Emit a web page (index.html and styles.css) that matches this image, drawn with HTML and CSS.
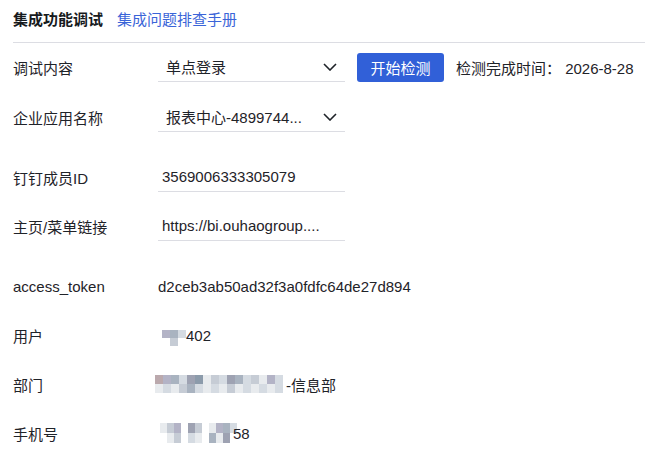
FILE: index.html
```html
<!DOCTYPE html>
<html>
<head>
    <meta charset="UTF-8">
    <title>集成功能调试</title>
    <link rel="stylesheet" href="styles.css">
</head>
<body>
    <div class="panel">
        <div class="header">
            <span class="title">集成功能调试</span>
            <a class="link" href="#">集成问题排查手册</a>
        </div>

        <div class="row first">
            <span class="label">调试内容</span>
            <div class="select">
                <span class="select-text">单点登录</span>
                <svg class="chevron" width="14" height="8" viewBox="0 0 14 8"><polyline points="1,1 7,7 13,1" /></svg>
            </div>
            <button class="btn">开始检测</button>
            <span class="status">检测完成时间： 2026-8-28</span>
        </div>

        <div class="row second">
            <span class="label">企业应用名称</span>
            <div class="select">
                <span class="select-text">报表中心-4899744...</span>
                <svg class="chevron" width="14" height="8" viewBox="0 0 14 8"><polyline points="1,1 7,7 13,1" /></svg>
            </div>
        </div>

        <div class="row third">
            <span class="label">钉钉成员ID</span>
            <div class="input">3569006333305079</div>
        </div>

        <div class="row fourth">
            <span class="label">主页/菜单链接</span>
            <div class="input">https://bi.ouhaogroup....</div>
        </div>

        <div class="info token">
            <span class="label">access_token</span>
            <span class="value">d2ceb3ab50ad32f3a0fdfc64de27d894</span>
        </div>

        <div class="info">
            <span class="label">用户</span>
            <span class="value masked">
                <span class="mosaic user">
                    <i class="s2"></i><i class="s3"></i><i class="s5"></i>
                    <i></i><i class="s4"></i><i></i>
                </span>402
            </span>
        </div>

        <div class="info">
            <span class="label">部门</span>
            <span class="value masked">
                <span class="mosaic dept">
                    <i class="s7"></i><i class="s2"></i><i class="s3"></i><i class="s5"></i><i class="s1"></i><i class="s8"></i><i class="s6"></i><i class="s4"></i><i class="s5"></i><i class="s1"></i><i class="s3"></i><i class="s5"></i><i class="s4"></i><i class="s6"></i><i class="s2"></i><i class="s5"></i>
                    <i class="s6"></i><i class="s5"></i><i class="s6"></i><i class="s4"></i><i class="s3"></i><i class="s5"></i><i class="s6"></i><i class="s5"></i><i class="s6"></i><i class="s4"></i><i class="s6"></i><i class="s5"></i><i class="s6"></i><i class="s5"></i><i class="s6"></i><i class="s5"></i>
                </span>-信息部
            </span>
        </div>

        <div class="info">
            <span class="label">手机号</span>
            <span class="value masked">
                <span class="mosaic phone">
                    <i class="s6"></i><i class="s4"></i><i class="s2"></i><i></i><i class="s1"></i><i class="s4"></i><i></i><i class="s6"></i><i class="s2"></i><i class="s3"></i><i class="s5"></i>
                    <i></i><i class="s6"></i><i class="s4"></i><i></i><i class="s5"></i><i class="s6"></i><i></i><i class="s3"></i><i class="s6"></i><i class="s1"></i><i></i>
                </span>58
            </span>
        </div>
    </div>
</body>
</html>
```

FILE: styles.css
```css
body {
    margin: 0;
    font-family: "Liberation Sans", "Noto Sans CJK SC", sans-serif;
    font-size: 15px;
    color: #1f2329;
    background-color: #fff;
}

.panel {
    padding-left: 13px;
}

.header {
    display: flex;
    align-items: center;
    gap: 14px;
    height: 43px;
    padding-bottom: 6px;
    box-sizing: border-box;
    border-bottom: 1px solid #dcdde3;
}

.title {
    font-weight: bold;
    color: #171a1d;
}

.link {
    color: #3a64d8;
    text-decoration: none;
}

.row {
    display: flex;
    align-items: center;
    height: 30px;
}

.row.first { margin-top: 9px; }
.row.second { margin-top: 20px; }
.row.third { margin-top: 30px; }
.row.fourth { margin-top: 19px; }

.label {
    width: 145px;
    flex-shrink: 0;
}

.select {
    display: flex;
    align-items: center;
    justify-content: space-between;
    width: 187px;
    height: 30px;
    padding: 0 8px;
    box-sizing: border-box;
    border-bottom: 1px solid #dcdde3;
}

.chevron {
    fill: none;
    stroke: #1f2329;
    stroke-width: 1.6;
}

.input {
    display: flex;
    align-items: center;
    width: 187px;
    height: 30px;
    padding: 0 4px;
    box-sizing: border-box;
    border-bottom: 1px solid #dcdde3;
    white-space: nowrap;
    overflow: hidden;
}

.btn {
    margin-left: 12px;
    width: 87px;
    height: 29px;
    border: none;
    border-radius: 3px;
    background-color: #3160d8;
    color: #fff;
    font-family: inherit;
    font-size: 15px;
    cursor: pointer;
}

.status {
    margin-left: 12px;
}

.info {
    display: flex;
    align-items: center;
    height: 20px;
    margin-top: 29px;
}

.info.token {
    margin-top: 35px;
}

.value.masked {
    display: flex;
    align-items: center;
}

/* pixelated privacy blocks */
.mosaic {
    display: grid;
    grid-auto-rows: 8px;
}

.mosaic i {
    display: block;
}

.mosaic.user {
    grid-template-columns: repeat(3, 8px);
    margin-left: 4px;
    margin-top: 6px;
}

.mosaic.dept {
    grid-template-columns: repeat(16, 8px);
    grid-auto-rows: 9px;
    margin-left: -3px;
    margin-right: 3px;
}

.mosaic.phone {
    grid-template-columns: repeat(11, 7px);
    grid-auto-rows: 10px;
    margin-left: 2px;
    margin-right: -4px;
}

.s1 { background-color: #9ea2b2; }
.s2 { background-color: #b3b3c6; }
.s3 { background-color: #a9b3c0; }
.s4 { background-color: #c6ccd5; }
.s5 { background-color: #d5dbe2; }
.s6 { background-color: #e8ebee; }
.s7 { background-color: #bba9ad; }
.s8 { background-color: #8c9bab; }
```
